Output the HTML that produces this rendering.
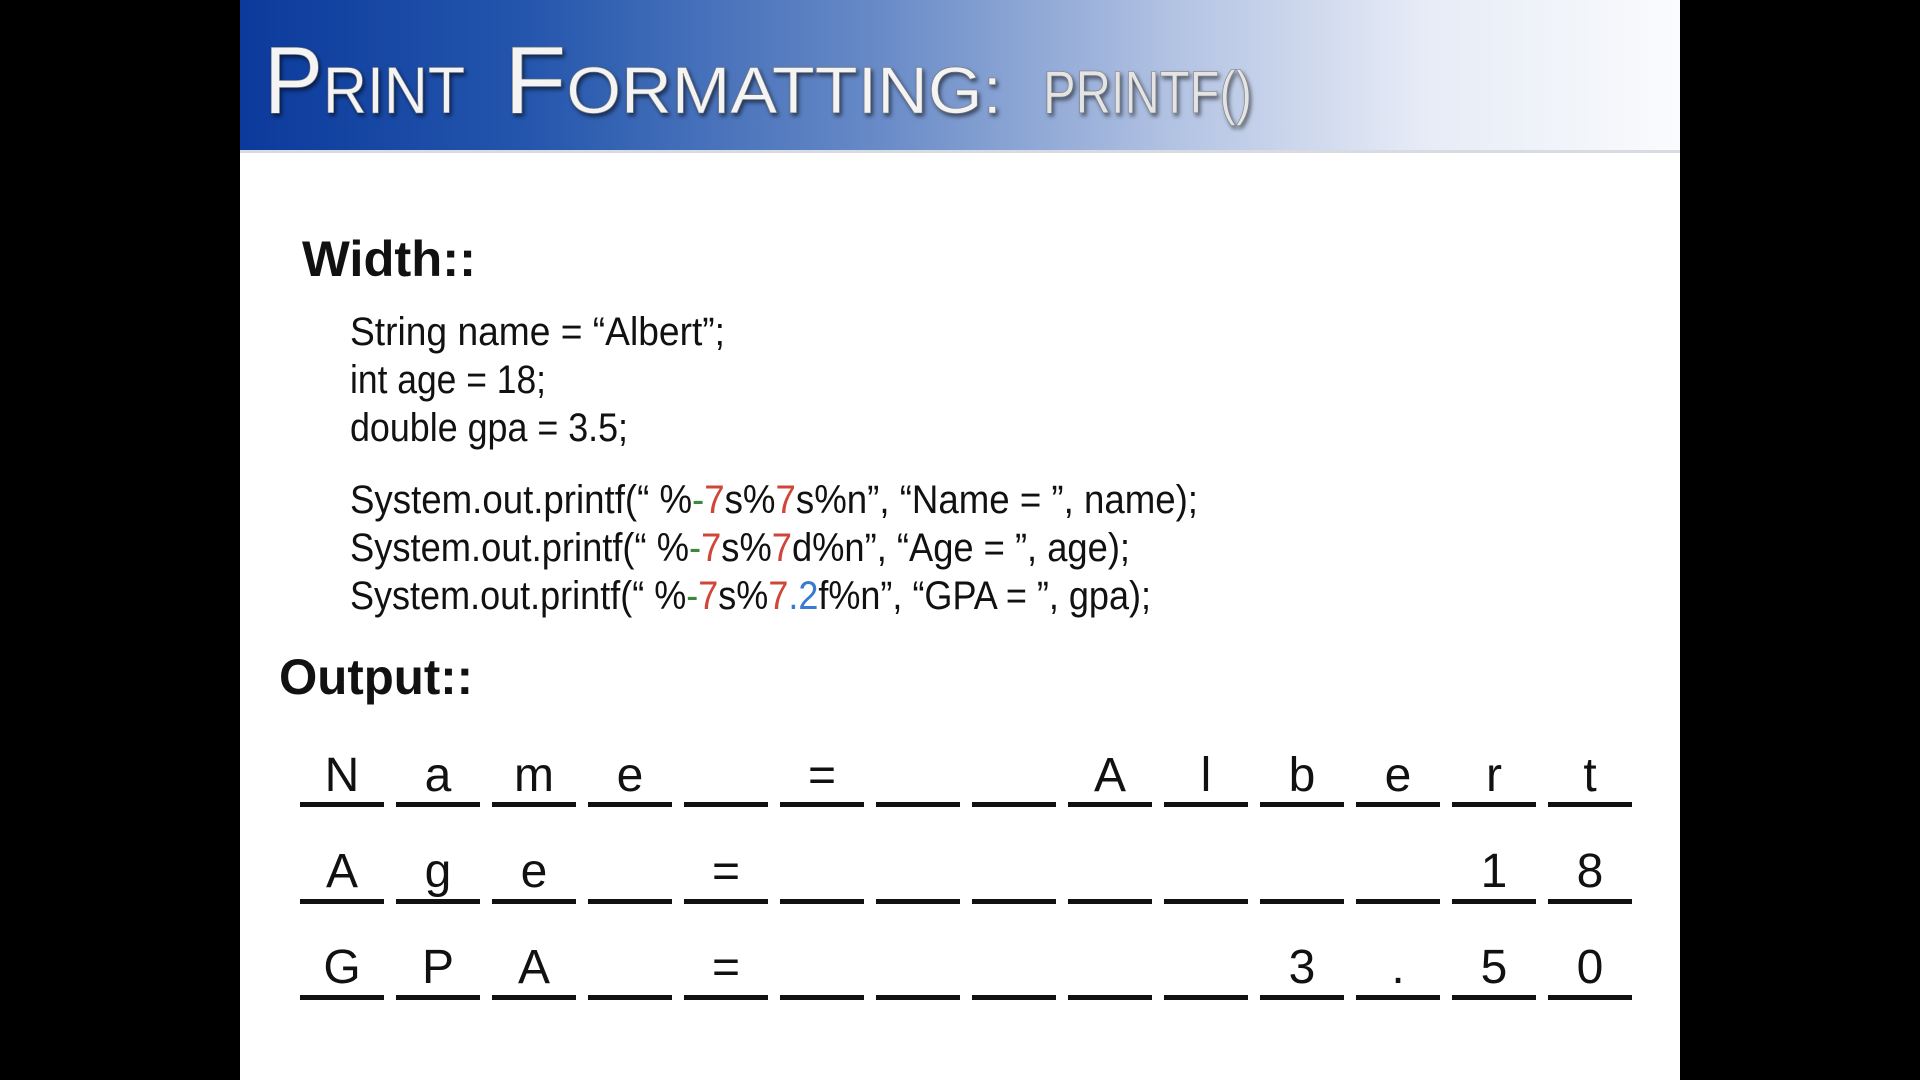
<!DOCTYPE html>
<html><head><meta charset="utf-8"><style>
html,body{margin:0;padding:0;background:#000;width:1920px;height:1080px;overflow:hidden}
svg{display:block}
</style></head><body>
<svg width="1920" height="1080" viewBox="0 0 1920 1080" xmlns="http://www.w3.org/2000/svg">
<defs>
<linearGradient id="hg" x1="0" y1="0" x2="1" y2="0">
<stop offset="0" stop-color="#0b3a9c"/>
<stop offset="0.2" stop-color="#2456ad"/>
<stop offset="0.45" stop-color="#6a8cc8"/>
<stop offset="0.65" stop-color="#b3c3e3"/>
<stop offset="0.82" stop-color="#e6ebf6"/>
<stop offset="1" stop-color="#fafbfd"/>
</linearGradient>
<filter id="sh"><feDropShadow dx="2" dy="3" stdDeviation="2" flood-color="#000" flood-opacity="0.55"/></filter>
</defs>
<rect x="240" y="0" width="1440" height="1080" fill="#fff"/>
<rect x="240" y="0" width="1440" height="150" fill="url(#hg)"/>
<rect x="240" y="150" width="1440" height="3" fill="#d8dbe2"/>
<g font-family="'Liberation Sans Narrow','Liberation Sans',sans-serif" fill="#f4f4f4" filter="url(#sh)" stroke="#777" stroke-width="0.6">
<text x="264" y="113" textLength="201" lengthAdjust="spacingAndGlyphs"><tspan font-size="96">P</tspan><tspan font-size="66">RINT</tspan></text>
<text x="504" y="113" textLength="498" lengthAdjust="spacingAndGlyphs"><tspan font-size="96">F</tspan><tspan font-size="66">ORMATTING:</tspan></text>
<text x="1043" y="113" font-size="60" fill="#e4e4e4" textLength="209" lengthAdjust="spacingAndGlyphs">PRINTF()</text>
</g>
<g font-family="'Liberation Sans',sans-serif" fill="#111">
<text x="302" y="276" font-size="50" font-weight="bold" textLength="174" lengthAdjust="spacingAndGlyphs">Width::</text>
<text x="279" y="694" font-size="50" font-weight="bold" textLength="194" lengthAdjust="spacingAndGlyphs">Output::</text>
<g font-size="40">
<text x="350" y="345" textLength="375" lengthAdjust="spacingAndGlyphs">String name = “Albert”;</text>
<text x="350" y="393" textLength="196" lengthAdjust="spacingAndGlyphs">int age = 18;</text>
<text x="350" y="441" textLength="278" lengthAdjust="spacingAndGlyphs">double gpa = 3.5;</text>
<text x="350" y="513" textLength="848" lengthAdjust="spacingAndGlyphs">System.out.printf(“ %<tspan fill="#3a8a3a">-</tspan><tspan fill="#d0463a">7</tspan>s%<tspan fill="#d0463a">7</tspan>s%n”, “Name  = ”, name);</text>
<text x="350" y="561" textLength="780" lengthAdjust="spacingAndGlyphs">System.out.printf(“ %<tspan fill="#3a8a3a">-</tspan><tspan fill="#d0463a">7</tspan>s%<tspan fill="#d0463a">7</tspan>d%n”, “Age  = ”, age);</text>
<text x="350" y="609" textLength="801" lengthAdjust="spacingAndGlyphs">System.out.printf(“ %<tspan fill="#3a8a3a">-</tspan><tspan fill="#d0463a">7</tspan>s%<tspan fill="#d0463a">7</tspan><tspan fill="#3a7ad0">.2</tspan>f%n”, “GPA = ”, gpa);</text>
</g>
</g>
<g font-family="'Liberation Sans',sans-serif" font-size="48" fill="#111" text-anchor="middle">
<text y="791"><tspan x="342">N</tspan><tspan x="438">a</tspan><tspan x="534">m</tspan><tspan x="630">e</tspan><tspan x="822">=</tspan><tspan x="1110">A</tspan><tspan x="1206">l</tspan><tspan x="1302">b</tspan><tspan x="1398">e</tspan><tspan x="1494">r</tspan><tspan x="1590">t</tspan></text>
<text y="887"><tspan x="342">A</tspan><tspan x="438">g</tspan><tspan x="534">e</tspan><tspan x="726">=</tspan><tspan x="1494">1</tspan><tspan x="1590">8</tspan></text>
<text y="983"><tspan x="342">G</tspan><tspan x="438">P</tspan><tspan x="534">A</tspan><tspan x="726">=</tspan><tspan x="1302">3</tspan><tspan x="1398">.</tspan><tspan x="1494">5</tspan><tspan x="1590">0</tspan></text>
</g>
<g fill="#111" stroke="none">
<path d="M300 802h84v5h-84zM396 802h84v5h-84zM492 802h84v5h-84zM588 802h84v5h-84zM684 802h84v5h-84zM780 802h84v5h-84zM876 802h84v5h-84zM972 802h84v5h-84zM1068 802h84v5h-84zM1164 802h84v5h-84zM1260 802h84v5h-84zM1356 802h84v5h-84zM1452 802h84v5h-84zM1548 802h84v5h-84z"/>
<path d="M300 899h84v5h-84zM396 899h84v5h-84zM492 899h84v5h-84zM588 899h84v5h-84zM684 899h84v5h-84zM780 899h84v5h-84zM876 899h84v5h-84zM972 899h84v5h-84zM1068 899h84v5h-84zM1164 899h84v5h-84zM1260 899h84v5h-84zM1356 899h84v5h-84zM1452 899h84v5h-84zM1548 899h84v5h-84z"/>
<path d="M300 995h84v5h-84zM396 995h84v5h-84zM492 995h84v5h-84zM588 995h84v5h-84zM684 995h84v5h-84zM780 995h84v5h-84zM876 995h84v5h-84zM972 995h84v5h-84zM1068 995h84v5h-84zM1164 995h84v5h-84zM1260 995h84v5h-84zM1356 995h84v5h-84zM1452 995h84v5h-84zM1548 995h84v5h-84z"/>
</g>
</svg>
</body></html>
